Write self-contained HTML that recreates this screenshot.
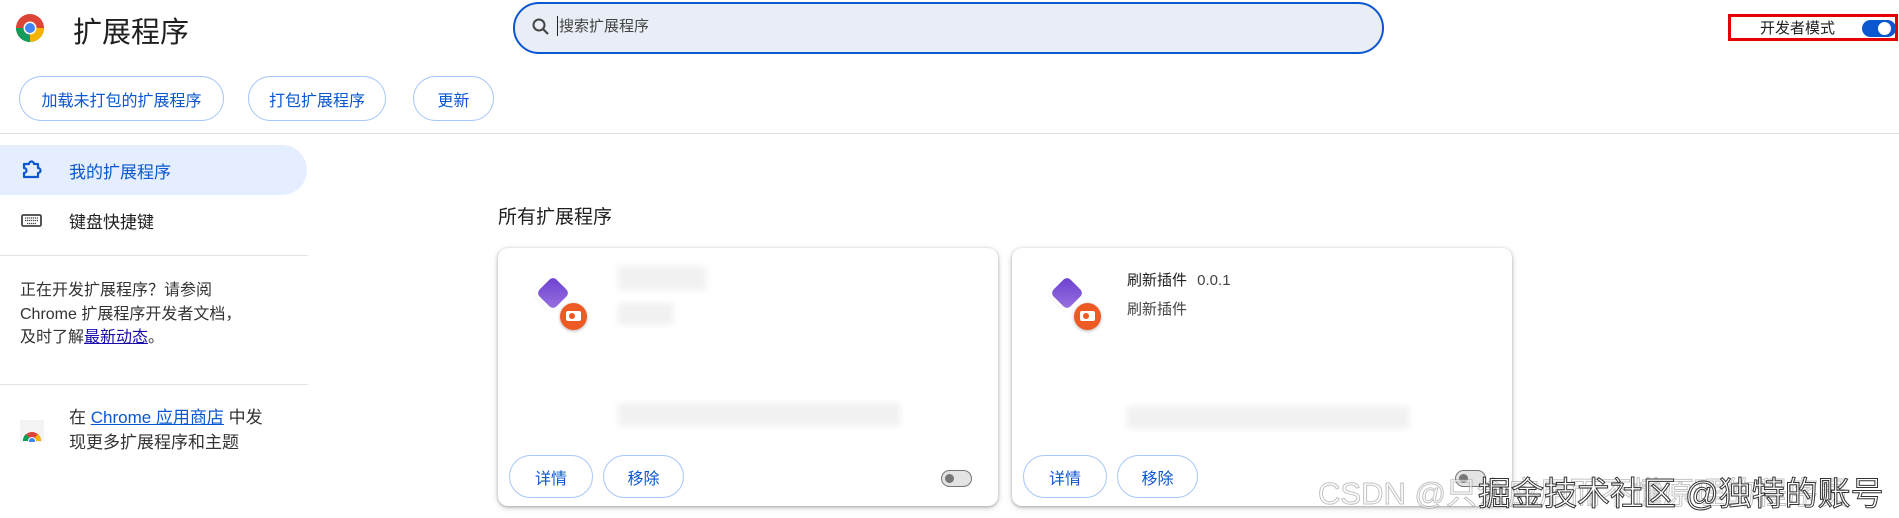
<!DOCTYPE html>
<html><head><meta charset="utf-8"><style>
*{box-sizing:border-box;margin:0;padding:0}
body{width:1899px;height:518px;overflow:hidden;background:#fff;font-family:"Liberation Sans","Noto Sans CJK SC",sans-serif;color:#1f1f1f;position:relative}
.a{position:absolute}
.btn{position:absolute;border:1px solid #a8c7fa;border-radius:24px;color:#0b57d0;font-size:16px;display:flex;align-items:center;justify-content:center;background:#fff}
.card{position:absolute;top:248px;width:500px;height:258px;background:#fff;border-radius:10px;box-shadow:0 1px 3px rgba(0,0,0,.3),0 2px 8px rgba(0,0,0,.12)}
.blur{position:absolute;background:#f1f1f1;filter:blur(3px)}
.tg{position:absolute;width:31px;height:17px;border:1.5px solid #777;border-radius:9px;background:#e3e3e3}
.tg:after{content:"";position:absolute;left:3px;top:3px;width:9px;height:9px;border-radius:50%;background:#747775}
</style></head><body>
<svg class="a" style="left:15px;top:13px" width="30" height="30" viewBox="0 0 30 30">
<circle cx="15" cy="15" r="14" fill="#db4437"/>
<path d="M15 15 L27.1 22 A14 14 0 0 1 2.9 22 Z" fill="#0f9d58"/>
<path d="M15 15 L1 15 A14 14 0 0 0 2.9 22 Z" fill="#0f9d58"/>
<path d="M15 15 L29 15 A14 14 0 0 1 15 29 Z" fill="#f4b400"/>
<circle cx="15" cy="15" r="6.5" fill="#fff"/><circle cx="15" cy="15" r="5" fill="#4285f4"/></svg>
<div class="a" style="left:73px;top:9px;font-size:29px;color:#1f1f1f">扩展程序</div>
<div class="a" style="left:513px;top:2px;width:871px;height:52px;border:2px solid #0b57d0;border-radius:26px;background:#e9eef6"></div>
<svg class="a" style="left:531px;top:17px" width="20" height="20" viewBox="0 0 20 20"><circle cx="8" cy="8" r="5.5" fill="none" stroke="#444" stroke-width="2"/><path d="M12 12 L17 17" stroke="#444" stroke-width="2.2"/></svg>
<div class="a" style="left:557px;top:16px;width:1px;height:20px;background:#222"></div>
<div class="a" style="left:559px;top:15px;font-size:15px;color:#444">搜索扩展程序</div>
<div class="a" style="left:1728px;top:14px;width:170px;height:27px;border:3px solid #e60000"></div>
<div class="a" style="left:1760px;top:17px;font-size:15px;color:#1f1f1f">开发者模式</div>
<div class="a" style="left:1862px;top:20px;width:34px;height:17px;border-radius:9px;background:#0b57d0"></div>
<div class="a" style="left:1878px;top:22px;width:13px;height:13px;border-radius:50%;background:#fff"></div>
<div class="btn" style="left:19px;top:76px;width:205px;height:45px">加载未打包的扩展程序</div>
<div class="btn" style="left:248px;top:76px;width:138px;height:45px">打包扩展程序</div>
<div class="btn" style="left:413px;top:76px;width:81px;height:45px">更新</div>
<div class="a" style="left:0;top:133px;width:1899px;height:1px;background:#dcdcdc"></div>
<div class="a" style="left:0;top:145px;width:307px;height:50px;background:#d3e3fd;opacity:.6;border-radius:0 25px 25px 0"></div>
<svg class="a" style="left:21px;top:159px" width="22" height="22" viewBox="0 0 22 22"><path d="M3 5 H8 A2.5 2.5 0 0 1 13 5 H17 V9 A2.5 2.5 0 0 1 17 14 V18 H3 V14 A2.5 2.5 0 0 0 3 9 Z" fill="none" stroke="#0b57d0" stroke-width="2.2" stroke-linejoin="round"/></svg>
<div class="a" style="left:69px;top:158px;font-size:17px;color:#0b57d0">我的扩展程序</div>
<svg class="a" style="left:21px;top:214px" width="21" height="13" viewBox="0 0 21 13"><rect x="1" y="1" width="19" height="11" rx="1.5" fill="none" stroke="#444" stroke-width="1.8"/><path d="M4 4h13M4 6.5h13M6 9.5h9" stroke="#444" stroke-width="1.3" stroke-dasharray="1.3 .7"/></svg>
<div class="a" style="left:69px;top:208px;font-size:17px">键盘快捷键</div>
<div class="a" style="left:0;top:255px;width:308px;height:1px;background:#e3e3e3"></div>
<div class="a" style="left:20px;top:279px;font-size:16px;line-height:23.5px;color:#333">正在开发扩展程序？请参阅<br>Chrome 扩展程序开发者文档，<br>及时了解<span style="color:#1a0dab;text-decoration:underline">最新动态</span>。</div>
<div class="a" style="left:0;top:384px;width:308px;height:1px;background:#e3e3e3"></div>
<svg class="a" style="left:20px;top:420px" width="24" height="22" viewBox="0 0 24 22"><rect x="0" y="0" width="24" height="22" fill="#f3f3f3"/><path d="M3 21 A9 9 0 0 1 21 21 Z" fill="#db4437"/><path d="M3 21 A9 9 0 0 1 6 14 L12 21Z" fill="#0f9d58"/><path d="M21 21 A9 9 0 0 0 18 14 L12 21Z" fill="#f4b400"/><circle cx="12" cy="21" r="4" fill="#fff"/><circle cx="12" cy="21" r="3" fill="#4285f4"/></svg>
<div class="a" style="left:69px;top:405px;font-size:17px;line-height:25px;color:#333">在 <span style="color:#0b57d0;text-decoration:underline">Chrome 应用商店</span> 中发<br>现更多扩展程序和主题</div>
<div class="a" style="left:498px;top:202px;font-size:19px;color:#1f1f1f">所有扩展程序</div>
<div class="card" style="left:498px">
 <div class="a" style="left:43px;top:33px;width:24px;height:24px;border-radius:5px;background:linear-gradient(135deg,#6a3fd0,#9a72e0);transform:rotate(45deg);box-shadow:0 0 0 3px #fff,0 2px 4px rgba(0,0,0,.15)"></div>
 <div class="a" style="left:62px;top:55px;width:27px;height:27px;border-radius:50%;background:#ee5a24;box-shadow:0 1px 3px rgba(0,0,0,.3)"></div>
 <div class="a" style="left:68px;top:63px;width:15px;height:10px;border-radius:2px;background:#fff"></div>
 <div class="a" style="left:71px;top:65px;width:6px;height:6px;border-radius:50%;background:#ee5a24"></div>
 <div class="blur" style="left:120px;top:18px;width:88px;height:24px"></div>
 <div class="blur" style="left:120px;top:55px;width:55px;height:22px"></div>
 <div class="blur" style="left:120px;top:155px;width:282px;height:23px"></div>
 <div class="btn" style="left:11px;top:207px;width:84px;height:43px">详情</div>
 <div class="btn" style="left:105px;top:207px;width:81px;height:43px">移除</div>
 <div class="tg" style="left:443px;top:222px"></div>
</div>
<div class="card" style="left:1012px">
 <div class="a" style="left:43px;top:33px;width:24px;height:24px;border-radius:5px;background:linear-gradient(135deg,#6a3fd0,#9a72e0);transform:rotate(45deg);box-shadow:0 0 0 3px #fff,0 2px 4px rgba(0,0,0,.15)"></div>
 <div class="a" style="left:62px;top:55px;width:27px;height:27px;border-radius:50%;background:#ee5a24;box-shadow:0 1px 3px rgba(0,0,0,.3)"></div>
 <div class="a" style="left:68px;top:63px;width:15px;height:10px;border-radius:2px;background:#fff"></div>
 <div class="a" style="left:71px;top:65px;width:6px;height:6px;border-radius:50%;background:#ee5a24"></div>
 <div class="a" style="left:115px;top:21px;font-size:15px;color:#1f1f1f">刷新插件 <span style="color:#444;margin-left:6px">0.0.1</span></div>
 <div class="a" style="left:115px;top:50px;font-size:15px;color:#444">刷新插件</div>
 <div class="blur" style="left:115px;top:158px;width:282px;height:23px"></div>
 <div class="btn" style="left:11px;top:207px;width:84px;height:43px">详情</div>
 <div class="btn" style="left:105px;top:207px;width:81px;height:43px">移除</div>
 <div class="tg" style="left:443px;top:222px"></div>
</div>
<div class="a" style="left:1318px;top:468px;font-size:31px;color:rgba(255,255,255,.6);-webkit-text-stroke:1px rgba(120,120,120,.45);white-space:nowrap">CSDN @只会应用而不懂原理的程序员</div>
<div class="a" style="left:1478px;top:467px;font-size:33px;color:#fff;-webkit-text-stroke:1px #333;white-space:nowrap;letter-spacing:0px">掘金技术社区 @独特的账号</div>
</body></html>
